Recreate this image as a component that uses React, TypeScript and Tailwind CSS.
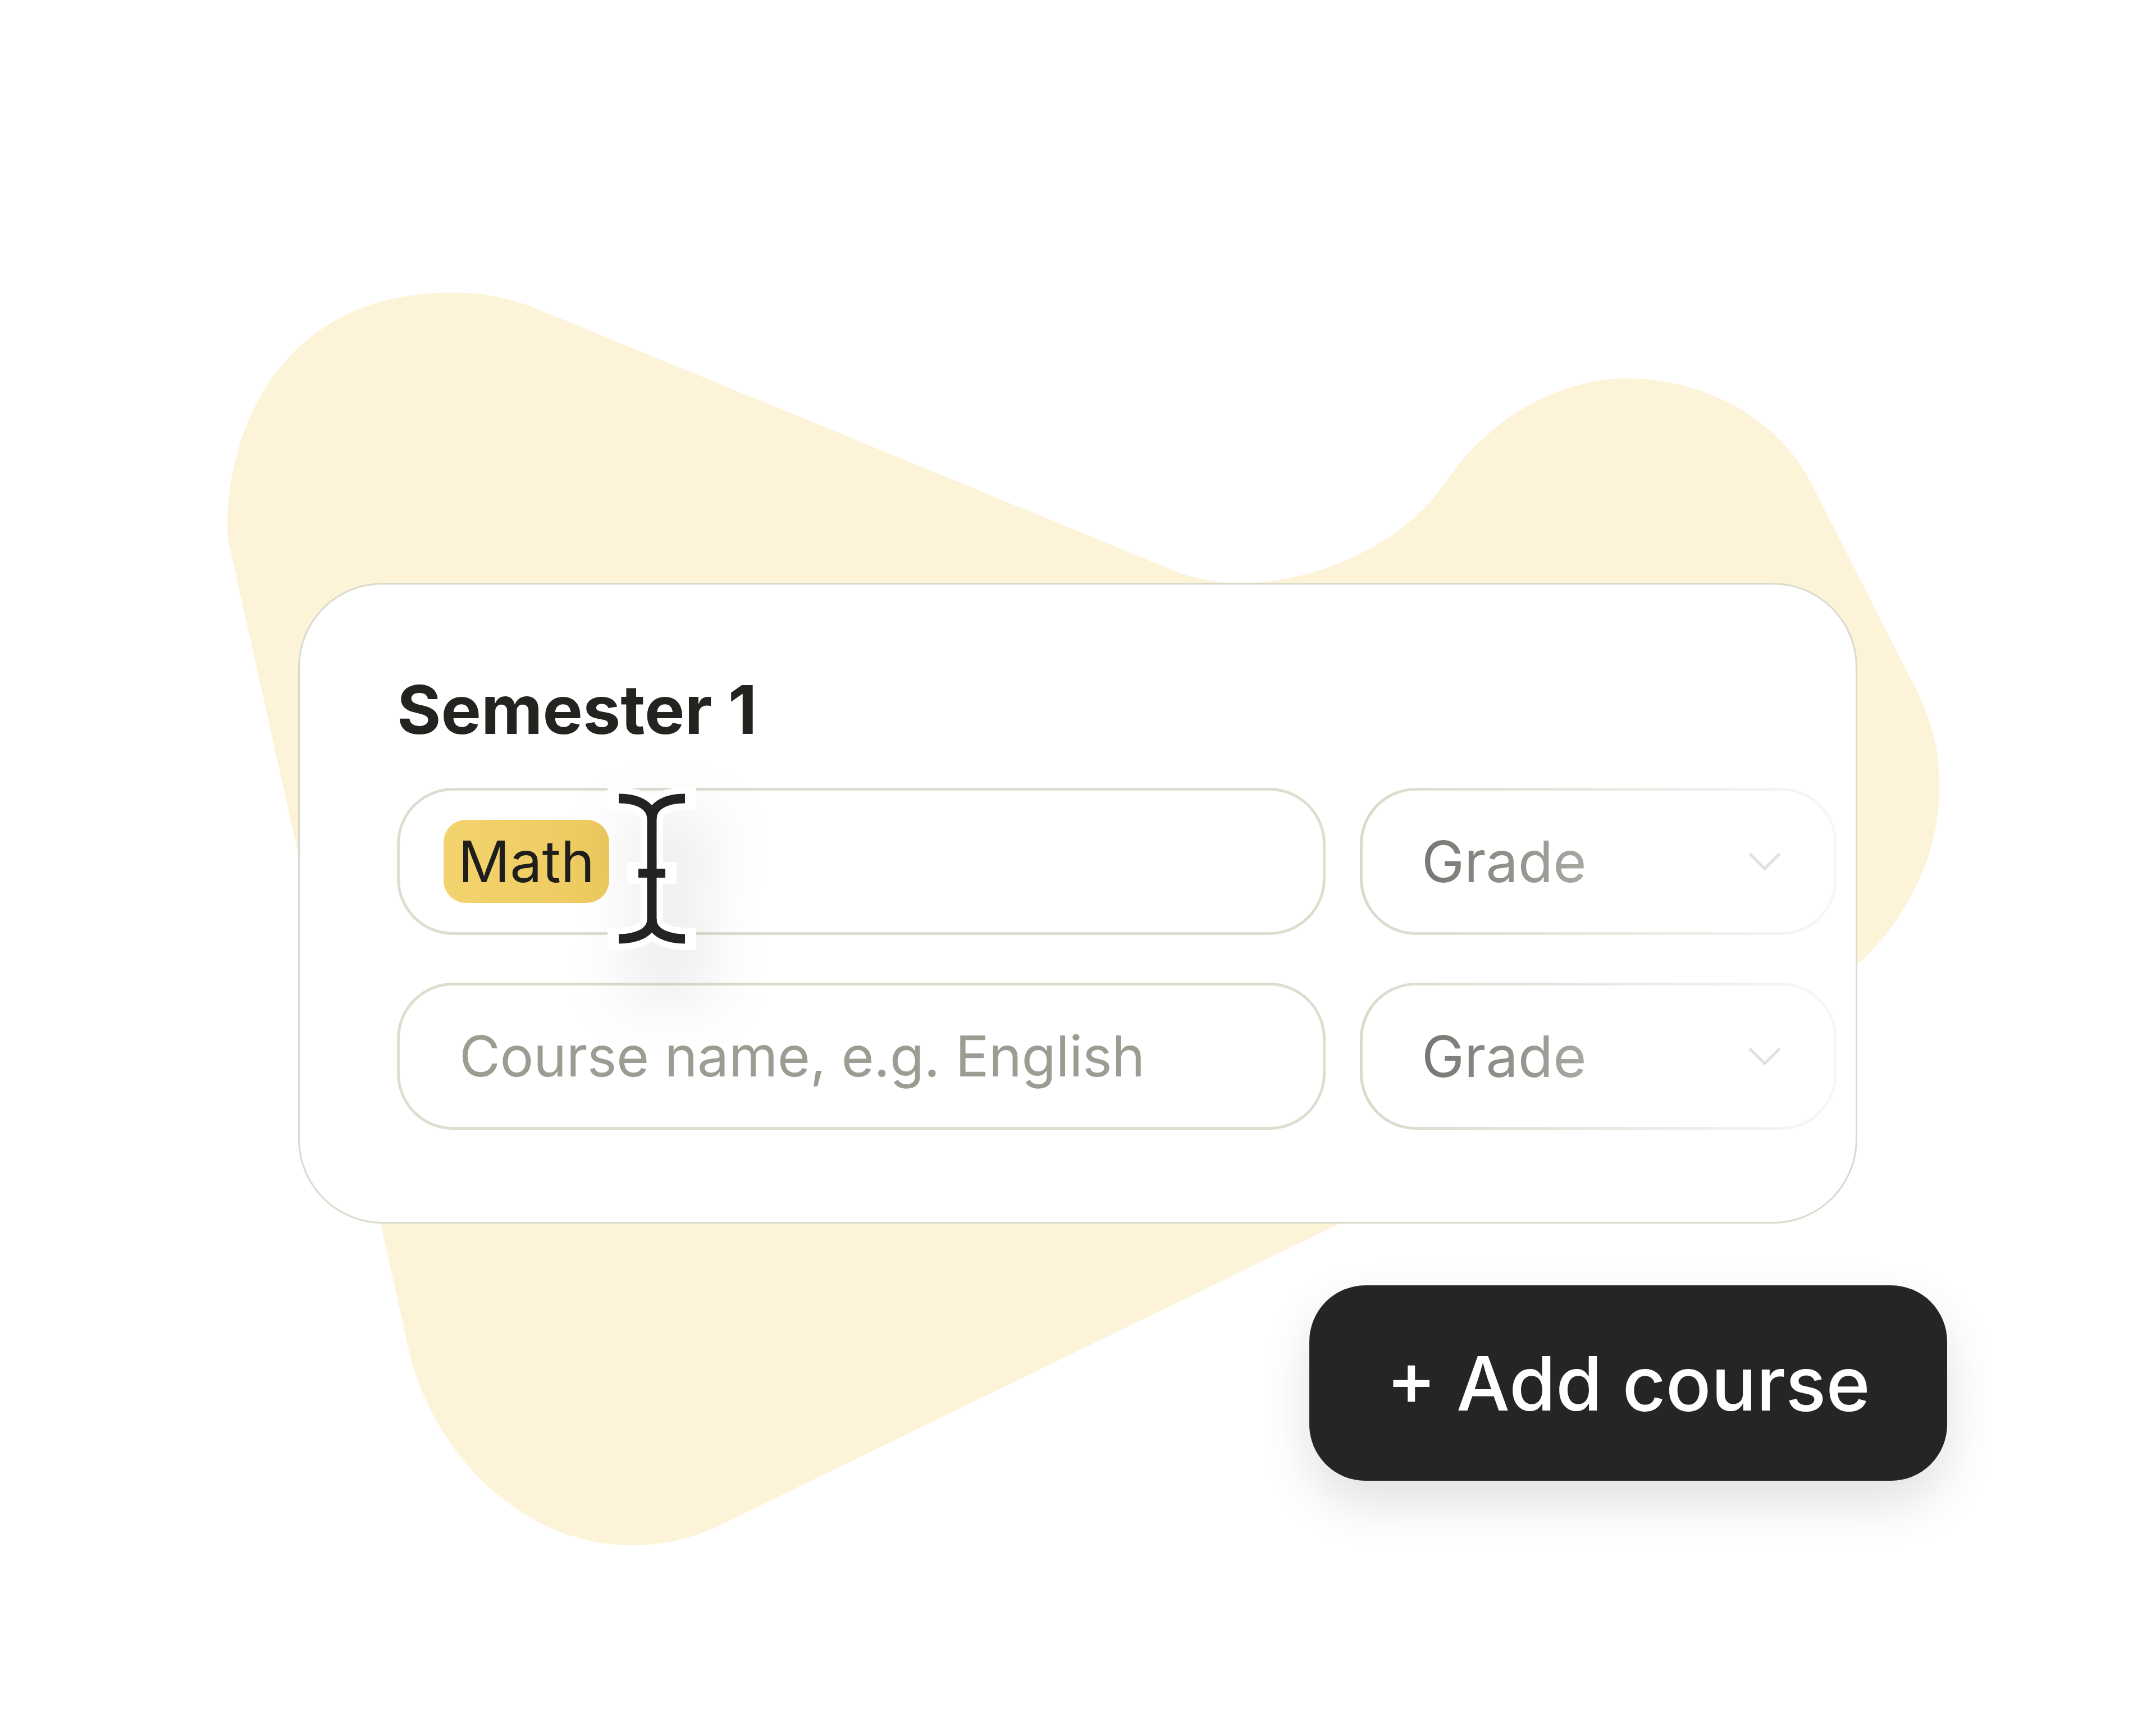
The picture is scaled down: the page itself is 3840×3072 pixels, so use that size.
import React from 'react';

function Chevron() {
  return (
    <svg width="56" height="31" viewBox="0 0 56 31" fill="none" className="shrink-0">
      <polyline points="3,3 28,28 53,3" stroke="#e0e1dc" strokeWidth="5" strokeLinecap="round" strokeLinejoin="round" />
    </svg>
  );
}

function GradeSelect() {
  return (
    <div className="flex h-[262px] w-[850px] shrink-0 items-center justify-between rounded-[100px] border-[5px] border-transparent pl-[105px] pr-[96px] [background:linear-gradient(#fff,#fff)_padding-box,linear-gradient(to_right,#d8dbcc,#eeefe9_70%,#f7f7f5)_border-box]">
      <span className="bg-gradient-to-r from-[#767772] to-[#a9aaa3] bg-clip-text text-[102px] leading-none text-transparent">
        Grade
      </span>
      <Chevron />
    </div>
  );
}

function TextCursor() {
  const arcs = [
    'M22 25 C52 25 81 35 81 62',
    'M140 25 C110 25 81 35 81 62',
    'M81 55 V247',
    'M22 275 C52 275 81 265 81 240',
    'M140 275 C110 275 81 265 81 240',
  ];
  return (
    <svg
      width="160"
      height="302"
      viewBox="0 0 160 302"
      fill="none"
      className="pointer-events-none absolute left-[373px] top-[-6px] z-10 [filter:drop-shadow(30px_70px_60px_rgba(0,0,0,0.15))]"
    >
      {arcs.map((d) => (
        <path key={'w' + d} d={d} stroke="#fff" strokeWidth="40" strokeLinecap="square" />
      ))}
      <path d="M57 158 H105" stroke="#fff" strokeWidth="40" strokeLinecap="square" />
      {arcs.map((d) => (
        <path key={'b' + d} d={d} stroke="#222421" strokeWidth="17" />
      ))}
      <path d="M57 158 H105" stroke="#222421" strokeWidth="16" />
    </svg>
  );
}

export default function App() {
  return (
    <div className="relative h-[3072px] w-[3840px] overflow-hidden bg-white font-['Inter',sans-serif]">
      <svg
        className="absolute inset-0"
        width="3840"
        height="3072"
        viewBox="0 0 3840 3072"
      >
        <path
          fill="#fcf3d8"
          d="M954 549 L2100 1020 C2250 1075 2480 1000 2576 857 C2646 753 2768 674 2898 674 C3040 674 3170 750 3224 857 L3418 1238 C3450 1310 3454 1350 3454 1404 C3454 1520 3400 1630 3316 1711 L3000 1880 L1291 2712 C1230 2742 1180 2752 1125 2752 C930 2752 775 2590 730 2413 L406 960 C395 800 480 521 805 521 C860 521 910 531 954 549 Z"
        />
      </svg>

      <div className="relative pl-[531px] pt-[1038px]">
        <div className="w-[2777px] rounded-[150px] border-[3px] border-[#d8dbcc] bg-white pb-[164px] pl-[173px] pr-[33px] pt-[161px]">
          <h2 className="text-[120px] font-bold leading-[124px] text-[#222420]">Semester 1</h2>

          <div className="mt-[77px] flex flex-col gap-[85px]">
            <div className="relative flex gap-[61px]">
              <div className="flex h-[262px] flex-1 items-center rounded-[100px] border-[5px] border-[#dcdfd0] pl-[78px]">
                <span className="flex h-[148px] items-center rounded-[40px] bg-gradient-to-r from-[#f3d36d] to-[#edca5f] px-[26px] text-[102px] leading-none text-[#1e1f1c]">
                  Math
                </span>
              </div>
              <GradeSelect />
              <TextCursor />
            </div>

            <div className="flex gap-[61px]">
              <div className="flex h-[262px] flex-1 items-center rounded-[100px] border-[5px] border-[#dcdfd0] pl-[106px]">
                <span className="text-[100px] leading-none tracking-[-0.5px] text-[#9c9d92]">Course name, e.g. English</span>
              </div>
              <GradeSelect />
            </div>
          </div>
        </div>

        <button className="ml-[1801px] mt-[110px] flex h-[348px] w-[1136px] items-center justify-center rounded-[100px] bg-[#242623] text-[134px] font-medium leading-none text-white shadow-[0_40px_90px_rgba(0,0,0,0.12)]">
          + Add course
        </button>
      </div>
    </div>
  );
}
